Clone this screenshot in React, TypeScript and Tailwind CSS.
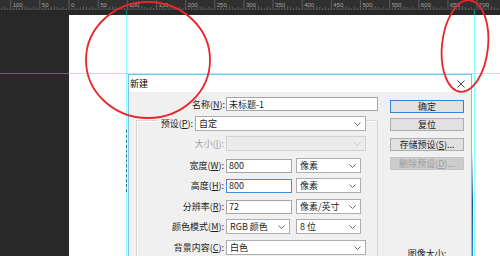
import React from "react";

const Ruler = () => {
  const unit = 29.15 / 50;
  const origin = 69;
  const ticks: React.ReactNode[] = [];
  const labels: React.ReactNode[] = [];
  for (let v = -120; v <= 750; v += 5) {
    const x = origin + v * unit;
    if (x < 0 || x > 500) continue;
    let h = 2;
    if (v % 50 === 0) h = 10;
    else if (v % 25 === 0) h = 4;
    else if (v % 10 === 0) h = 3;
    ticks.push(
      <line key={"t" + v} x1={x} x2={x} y1={10 - h} y2={10} stroke="#7c7c7c" strokeWidth={0.6} />
    );
    if (v % 50 === 0) {
      labels.push(
        <text key={"l" + v} x={x + 2} y={6.5} fontSize={6} fill="#a5a5a5" fontFamily="Liberation Sans, sans-serif">
          {Math.abs(v)}
        </text>
      );
    }
  }
  return (
    <svg width="500" height="10" className="block shrink-0 bg-[#303030]">
      {ticks}
      {labels}
      <line x1="0" x2="500" y1="9.7" y2="9.7" stroke="#4a4a4a" strokeWidth={0.6} />
    </svg>
  );
};

const Chevron = ({ c = "#5a5a5a" }: { c?: string }) => (
  <svg width="7" height="4" viewBox="0 0 7 4" className="shrink-0">
    <polyline points="0.5,0.5 3.5,3.5 6.5,0.5" fill="none" stroke={c} strokeWidth="0.9" />
  </svg>
);

const Select = ({ cls, text, disabled }: { cls: string; text?: string; disabled?: boolean }) => (
  <div
    className={
      "h-[15px] flex items-center justify-between pl-[3px] pr-[4px] border " +
      (disabled ? "bg-[#ebebeb] border-[#d2d2d2] " : "bg-white border-[#adadad] ") +
      cls
    }
  >
    <span className="leading-none whitespace-nowrap">{text}</span>
    <Chevron c={disabled ? "#c4c4c4" : "#5a5a5a"} />
  </div>
);

const Input = ({ cls, text, focused }: { cls: string; text: string; focused?: boolean }) => (
  <div
    className={
      "h-[14px] flex items-center pl-[2px] bg-white border " +
      (focused ? "border-[#3c8fdc] " : "border-[#a5a5a5] ") +
      cls
    }
  >
    <span className="leading-none whitespace-nowrap">{text}</span>
  </div>
);

const Label = ({ children, disabled }: { children: React.ReactNode; disabled?: boolean }) => (
  <span
    className={
      "w-[89px] shrink-0 text-right pr-[2px] text-[9px] leading-none whitespace-nowrap " +
      (disabled ? "text-[#a3a3a3]" : "text-[#1e1e1e]")
    }
  >
    {children}
  </span>
);

const Button = ({ children, cls, primary, disabled }: { children: React.ReactNode; cls: string; primary?: boolean; disabled?: boolean }) => (
  <div
    className={
      "w-[74px] h-[13px] flex items-center justify-center text-[9px] leading-none whitespace-nowrap border " +
      (primary
        ? "bg-[#e1e1e1] border-[#2f86d6] text-[#1e1e1e] "
        : disabled
        ? "bg-[#cccccc] border-[#c4c4c4] text-[#9c9c9c] "
        : "bg-[#e1e1e1] border-[#adadad] text-[#1e1e1e] ") +
      cls
    }
  >
    {children}
  </div>
);

export default function App() {
  return (
    <div className="relative w-[500px] h-[256px] overflow-hidden bg-[#282828] flex flex-col font-['Noto_Sans_CJK_SC','Liberation_Sans',sans-serif]">
      <Ruler />
      <div className="h-[5px] shrink-0" />
      <div className="flex flex-1">
        <div className="w-[69px] shrink-0" />
        <div className="flex-1 bg-white" />
      </div>

      {/* guides */}
      <div className="absolute left-0 top-[73px] w-[500px] h-[1px] bg-[#00ffff]/45" />
      <div className="absolute left-[126px] top-[10px] w-[1px] h-[246px] bg-[#00ffff]/45" />
      <div className="absolute left-[474px] top-[10px] w-[1px] h-[246px] bg-[#00ffff]/45" />

      {/* stray dashed marks left of dialog */}
      <div className="absolute left-[126px] top-[130px] w-[1px] h-[62px] border-l border-dashed border-[#2b7f92]" />
      {/* dark blue edge right of dialog */}
      <div className="absolute left-[471px] top-[150px] w-[2px] h-[106px] bg-gradient-to-b from-transparent via-[#1d4f8c] to-[#2f8be0]" />

      {/* dialog */}
      <div className="absolute left-[128px] top-[74px] w-[344px] h-[200px] border border-[#86bde0] bg-[#f0f0f0] flex flex-col text-[9px] text-[#1e1e1e]">
        <div className="h-[17px] shrink-0 bg-white flex items-center justify-between pl-[1px] pr-[6px]">
          <span className="text-[9px] leading-none text-black">新建</span>
          <svg width="8" height="8" viewBox="0 0 8 8">
            <path d="M0.5 0.5 L7.5 7.5 M7.5 0.5 L0.5 7.5" stroke="#333" strokeWidth="0.9" />
          </svg>
        </div>
        <div className="flex flex-1 items-start">
          {/* left column */}
          <div className="w-[249px] shrink-0 flex flex-col">
            <div className="mt-[5px] h-[14px] flex items-center">
              <span className="w-[97px] shrink-0 text-right pr-[1px] text-[9px] leading-none whitespace-nowrap">
                名称(<u>N</u>):
              </span>
              <Input cls="w-[153px]" text="未标题-1" />
            </div>
            <div className="ml-[7px] mt-[9px] w-[242px] h-[170px] border border-[#d6d6d6] shadow-[inset_1px_1px_0_#fbfbfb] flex flex-col">
              <div className="-mt-[5px] h-[15px] flex items-center">
                <span className="ml-[21px] w-[36px] shrink-0 flex justify-end pr-[1px] bg-[#f0f0f0] text-[9px] leading-[15px] whitespace-nowrap">
                  <span>
                    预设(<u>P</u>):
                  </span>
                </span>
                <Select cls="ml-[1px] w-[171px]" text="自定" />
              </div>
              <div className="mt-[5px] h-[15px] flex items-center">
                <Label disabled>
                  大小(<u>I</u>):
                </Label>
                <Select cls="w-[140px]" disabled />
              </div>
              <div className="mt-[7px] h-[15px] flex items-center">
                <Label>
                  宽度(<u>W</u>):
                </Label>
                <Input cls="w-[66px]" text="800" />
                <Select cls="ml-[4px] w-[65px]" text="像素" />
              </div>
              <div className="mt-[5px] h-[15px] flex items-center">
                <Label>
                  高度(<u>H</u>):
                </Label>
                <Input cls="w-[66px]" text="800" focused />
                <Select cls="ml-[4px] w-[65px]" text="像素" />
              </div>
              <div className="mt-[6px] h-[15px] flex items-center">
                <Label>
                  分辨率(<u>R</u>):
                </Label>
                <Input cls="w-[66px]" text="72" />
                <Select cls="ml-[4px] w-[65px]" text="像素/英寸" />
              </div>
              <div className="mt-[5px] h-[15px] flex items-center">
                <Label>
                  颜色模式(<u>M</u>):
                </Label>
                <Select cls="w-[64px]" text="RGB 颜色" />
                <Select cls="ml-[6px] w-[65px]" text="8 位" />
              </div>
              <div className="mt-[6px] h-[15px] flex items-center">
                <Label>
                  背景内容(<u>C</u>):
                </Label>
                <Select cls="w-[140px]" text="白色" />
              </div>
            </div>
          </div>
          {/* right column */}
          <div className="ml-[12px] w-[74px] flex flex-col items-center">
            <Button cls="mt-[8px]" primary>
              确定
            </Button>
            <Button cls="mt-[5px]">复位</Button>
            <Button cls="mt-[7px]">
              存储预设(<u>S</u>)...
            </Button>
            <Button cls="mt-[6px]" disabled>
              删除预设(<u>D</u>)...
            </Button>
            <span className="mt-[79px] text-[9px] leading-none whitespace-nowrap">图像大小:</span>
          </div>
        </div>
      </div>

      {/* red annotation circles */}
      <svg width="500" height="256" className="absolute left-0 top-0 pointer-events-none">
        <ellipse cx="148" cy="60" rx="62" ry="58" fill="none" stroke="#e8262b" strokeWidth="1.8" />
        <ellipse cx="465" cy="46" rx="23" ry="46" fill="none" stroke="#e8262b" strokeWidth="1.8" transform="rotate(6 465 46)" />
      </svg>
    </div>
  );
}
